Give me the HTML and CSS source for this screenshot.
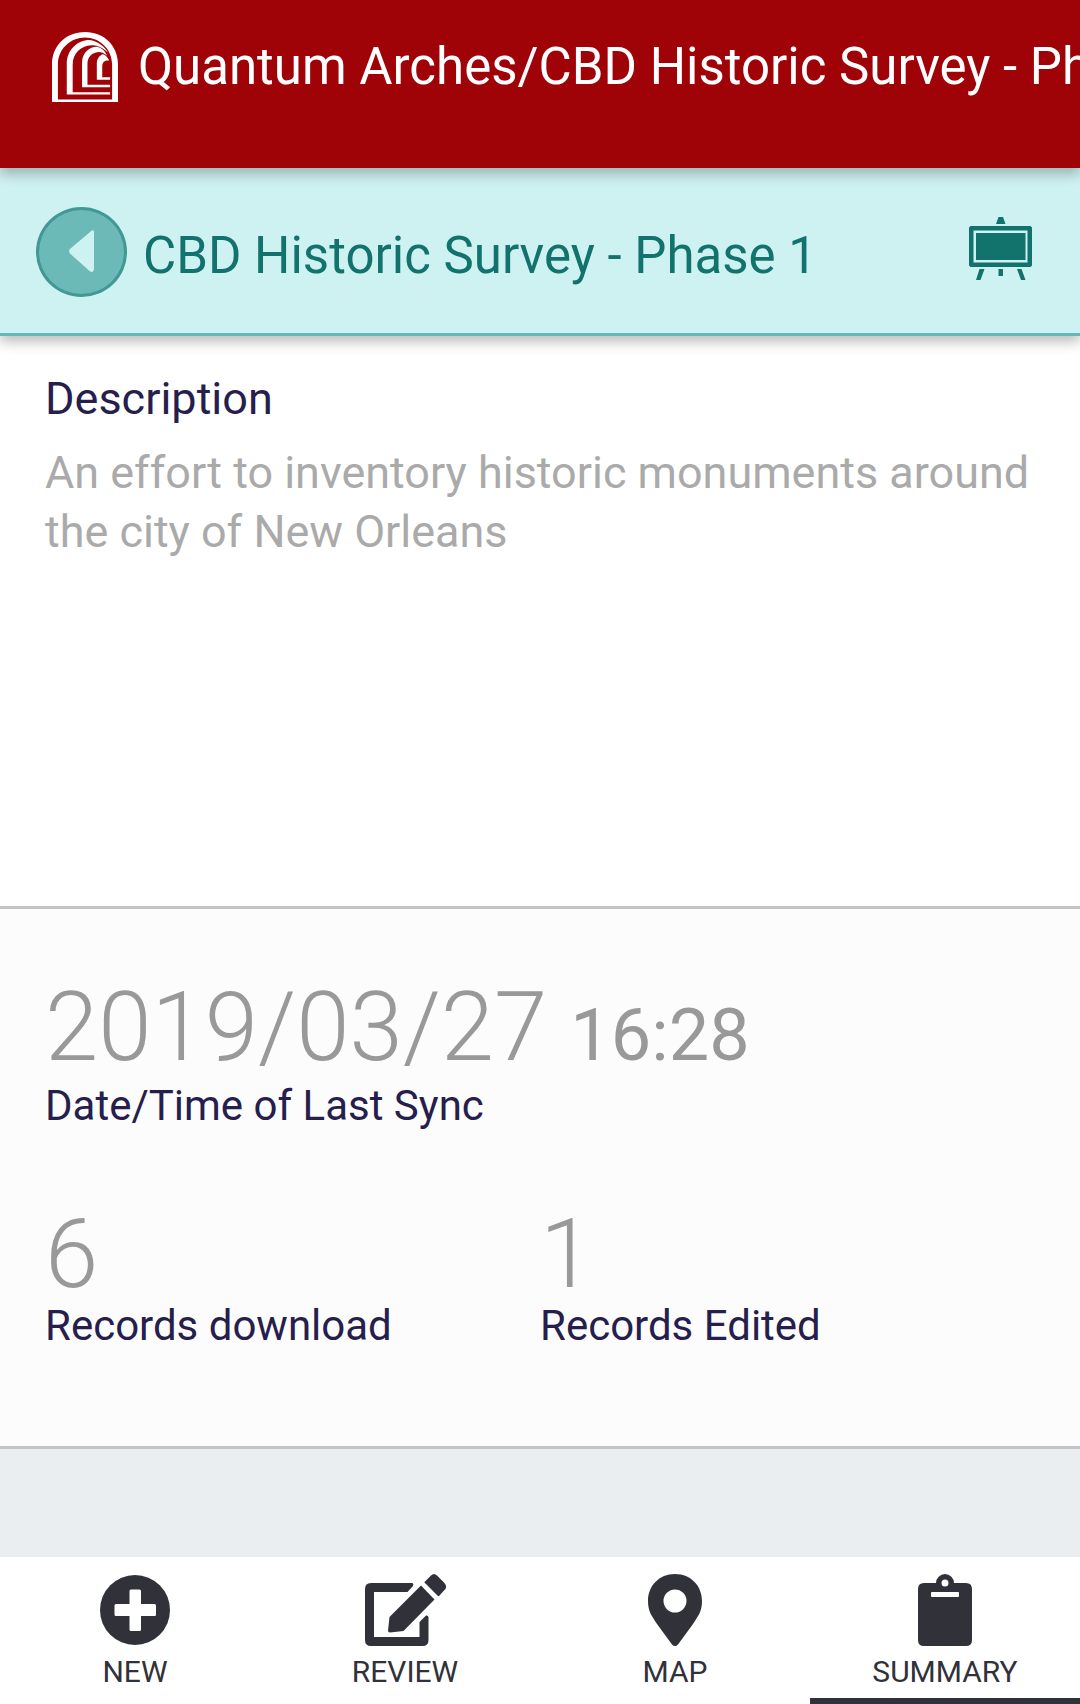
FILE: index.html
```html
<!DOCTYPE html>
<html lang="en">
<head>
<meta charset="utf-8">
<title>CBD Historic Survey - Phase 1</title>
<link rel="stylesheet" href="styles.css">
</head>
<body>
<div class="app">
  <header class="topbar">
    <svg class="logo" viewBox="0 0 67 72" preserveAspectRatio="none" fill="#fff">
      <path fill-rule="evenodd" d="M0 71V33C0 14 14 0 33.500 0S67 14 67 33V71ZM6 68.500H61V33C61 17 48 5.500 33.500 5.500S6 17 6 33Z"/>
      <path d="M15 63.500V32C15 18 26 8 38 8C46 9 53 14 57 21C51 16 46 13 40 13.500C29 14 21 22 21 33V61H59V63.500Z"/>
      <path d="M30.500 56V31C30.500 21 38 15 45.500 15C51 16 54 20 56 24C52 21 49 20 46 20.500C40 21 36 26 36 32V53.500H59V56Z"/>
      <path d="M45.500 48.500V32C45.500 27 48 24 51.500 22.500C54 23 57 26 58 29H55C52 30 51 32 51 35V46H59V48.500Z"/>
    </svg>
    <div class="topbar-title">Quantum Arches/CBD Historic Survey - Phase 1</div>
  </header>
  <div class="project-bar">
    <button class="back" aria-label="Back">
      <svg viewBox="0 0 91 90"><path d="M53.500 25.500Q57 21.500 58 24.500V62.500Q57 66.500 53.500 64L34.500 47Q31.500 44 34.500 41.500Z" fill="#cef1f1"/></svg>
    </button>
    <h1 class="project-title">CBD Historic Survey - Phase 1</h1>
    <svg class="easel" viewBox="0 0 63 64" fill="#12736d">
      <path d="M29.500 0H34L36.500 7H27Z"/>
      <path fill-rule="evenodd" d="M1.500 9H61.500L63 10.500V48.500L61.500 50H1.500L0 48.500V10.500ZM4.500 13.500V45.500H58.500V13.500Z"/>
      <path d="M7 16H56.500V43H7ZM10.500 52H15.500L11.500 63H7ZM29.500 52H34V59H29.500ZM48 52H52.500L56.500 63H52Z"/>
    </svg>
  </div>
  <section class="description">
    <h2 class="label label-lg">Description</h2>
    <p class="description-text">An effort to inventory historic monuments around the city of New Orleans</p>
  </section>
  <section class="stats">
    <div class="sync"><span class="value">2019/03/27</span><span class="time">16:28</span></div>
    <div class="label">Date/Time of Last Sync</div>
    <div class="counts">
      <div><div class="value">6</div><div class="label">Records download</div></div>
      <div><div class="value">1</div><div class="label">Records Edited</div></div>
    </div>
  </section>
  <div class="spacer"></div>
  <nav class="tabs">
    <div class="tab">
      <svg width="70" height="74" viewBox="0 0 70 74"><ellipse cx="35" cy="36" rx="35" ry="35"/><path fill="#fff" d="M31 15.500H39.500Q41 15.500 41 17V30H54.500Q56 30 56 31.500V41Q56 42 54.500 42H41V55.500Q41 57 39.500 57H31Q29.500 57 29.500 55.500V42H16Q14.500 42 14.500 40.500V31.500Q14.500 30 16 30H29.500V17Q29.500 15.500 31 15.500Z"/></svg>
      <span>NEW</span>
    </div>
    <div class="tab">
      <svg width="81" height="74" viewBox="0 0 81 74"><path d="M42.500 18H9V63H54.500V48L61 41.500Q63 41 63.500 43V66Q63.500 72 57.500 72H6Q0 72 0 66V15Q0 9 6 9H47.500Q49 10 48 12Z"/><path d="M56 11.500L69.500 25.500L38.500 57L25 58.500Q23 58.500 23 56.500L24.500 43ZM59.500 8L66 1.500Q69-1.500 72 1.500L79 8.500Q83 13 79.500 16L74.500 21.500Q73.500 22.500 72.500 21.500L59.500 8.500Z"/></svg>
      <span>REVIEW</span>
    </div>
    <div class="tab">
      <svg width="54" height="74" viewBox="0 0 54 74"><path fill-rule="evenodd" d="M27 0C43 0 54 12 54 27C54 38 50 42 45 50L30 70.500Q27 73.500 24 70.500L9 50C4 42 0 38 0 27C0 12 11 0 27 0ZM27 15.500A11.500 11.500 0 1 0 27 38.500A11.500 11.500 0 1 0 27 15.500Z"/></svg>
      <span>MAP</span>
    </div>
    <div class="tab tab-active">
      <svg width="54" height="74" viewBox="0 0 54 74"><path fill-rule="evenodd" d="M6 9H18A9 9 0 0 1 36 9H48Q54 9 54 15V66Q54 72 48 72H6Q0 72 0 66V15Q0 9 6 9ZM27 5.500A3.500 3.500 0 1 0 27 12.500A3.500 3.500 0 1 0 27 5.500ZM14 18Q13 18 13 19V22Q13 23 14 23H40Q41 23 41 22V19Q41 18 40 18Z"/></svg>
      <span>SUMMARY</span>
    </div>
  </nav>
</div>
</body>
</html>
```
FILE: styles.css
```css
* { box-sizing: border-box; }
body { margin: 0; font-family: Roboto, sans-serif; }
h1, h2, p { margin: 0; font-weight: 400; }
.app {
  width: 1080px;
  height: 1704px;
  display: flex;
  flex-direction: column;
  overflow: hidden;
  background: #fff;
}
.topbar {
  flex: none;
  height: 168px;
  padding: 32px 0 0 52px;
  display: flex;
  align-items: flex-start;
  gap: 20px;
  background: #9f0308;
  color: #fff;
  box-shadow: 0 6px 12px rgba(0, 0, 0, 0.26);
  z-index: 2;
}
.logo { flex: none; width: 66px; height: 71px; }
.topbar-title { padding-top: 1px; font-size: 51px; line-height: 68px; white-space: nowrap; }
.project-bar {
  flex: none;
  height: 168px;
  padding: 2px 48px 0 36px;
  display: flex;
  align-items: center;
  background: #cef1f1;
  border-bottom: 3px solid #66b9b5;
  box-shadow: 0 6px 12px rgba(0, 0, 0, 0.26);
  color: #12736d;
  z-index: 1;
}
.back {
  width: 91px;
  height: 90px;
  padding: 0;
  border: 3px solid #429894;
  border-radius: 50%;
  background: #6bbab7;
}
.back svg { display: block; width: 91px; height: 90px; margin: -3px; }
.project-title { margin-left: 16px; padding-top: 8px; font-size: 51px; line-height: 60px; }
.easel { width: 63px; height: 64px; margin-left: auto; margin-bottom: 6px; }
.description { flex: none; height: 570px; padding: 36px 45px 0; }
.label { color: #261e4c; font-size: 42px; line-height: 54px; }
.label-lg { font-size: 45px; }
.description-text { margin-top: 17px; color: #aaa; font-size: 44.95px; line-height: 59px; }
.stats {
  flex: none;
  height: 543px;
  padding: 66px 45px 0;
  border-top: 3px solid #c4c4c4;
  border-bottom: 3px solid #c4c4c4;
  background: #fcfcfc;
}
.sync { display: flex; align-items: baseline; gap: 23px; }
.value { color: #999; font-size: 96px; font-weight: 300; line-height: 104px; }
.time { color: #999; font-size: 72px; }
.counts { display: grid; grid-template-columns: 495px 1fr; margin-top: 76px; }
.counts .value { line-height: 90px; }
.spacer { flex: 1; background: #eaeef1; }
.tabs { flex: none; height: 147px; display: grid; grid-template-columns: repeat(4, 1fr); background: #fff; color: #31313a; }
.tab {
  display: flex;
  flex-direction: column;
  align-items: center;
  padding-top: 17px;
  font-size: 30px;
  line-height: 36px;
  border-bottom: 6px solid transparent;
}
.tab svg { fill: #31313a; margin-bottom: 6px; }
.tab-active { border-bottom-color: #31313a; }
```
